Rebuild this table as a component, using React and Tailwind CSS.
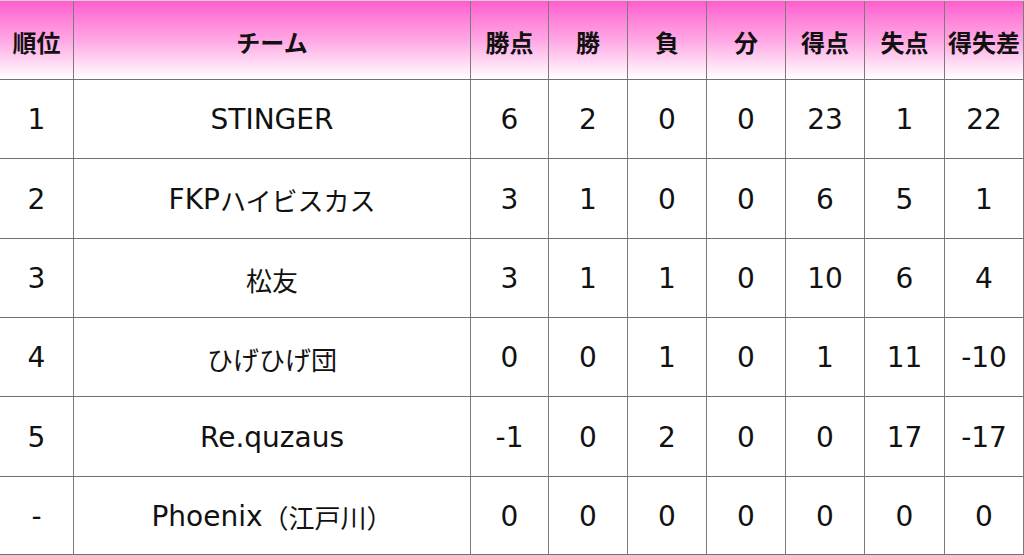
const headers = ["順位", "チーム", "勝点", "勝", "負", "分", "得点", "失点", "得失差"];

const colWidths = ["w-[74px]", "w-[397px]", "w-[78px]", "w-[79px]", "w-[79px]", "w-[79px]", "w-[79px]", "w-[80px]", "w-[79px]"];
const rowHeights = ["h-[79px]", "h-[80px]", "h-[79px]", "h-[79px]", "h-[80px]", "h-[78px]"];

const J = ({ children }) => (
  <span className="text-[26px] font-['Noto_Sans_CJK_JP',sans-serif]">{children}</span>
);

const rows = [
  { rank: "1", team: <>STINGER</>, stats: ["6", "2", "0", "0", "23", "1", "22"] },
  { rank: "2", team: <>FKP<J>ハイビスカス</J></>, stats: ["3", "1", "0", "0", "6", "5", "1"] },
  { rank: "3", team: <J>松友</J>, stats: ["3", "1", "1", "0", "10", "6", "4"] },
  { rank: "4", team: <J>ひげひげ団</J>, stats: ["0", "0", "1", "0", "1", "11", "-10"] },
  { rank: "5", team: <>Re.quzaus</>, stats: ["-1", "0", "2", "0", "0", "17", "-17"] },
  { rank: "-", team: <>Phoenix<J>（江戸川）</J></>, stats: ["0", "0", "0", "0", "0", "0", "0"] },
];

const App = () => {
  return (
    <div className="w-[1024px] h-[555px] bg-white border-t border-[#d4d4d4] overflow-hidden text-[#111]">
      <div className="flex h-[79px] border-b border-[#707070] bg-linear-to-b from-[#ff5ccf] via-[#ffa6e4] to-white">
        {headers.map((h, i) => (
          <div
            key={h}
            className={`${colWidths[i]} shrink-0 flex items-center justify-center pt-1 border-r border-[#7a7a7a] text-[24px] font-bold font-['Noto_Sans_CJK_JP',sans-serif]`}
          >
            {h}
          </div>
        ))}
      </div>

      {rows.map((r, ri) => {
        const cells = [r.rank, r.team, ...r.stats];
        return (
          <div key={ri} className={`flex ${rowHeights[ri]} border-b border-[#707070]`}>
            {cells.map((c, ci) => (
              <div
                key={ci}
                className={`${colWidths[ci]} shrink-0 flex items-center justify-center pt-0.5 border-r border-[#7a7a7a] text-[28px] font-['DejaVu_Sans','Noto_Sans_CJK_JP',sans-serif] whitespace-nowrap`}
              >
                {c}
              </div>
            ))}
          </div>
        );
      })}
    </div>
  );
};

export default App;
